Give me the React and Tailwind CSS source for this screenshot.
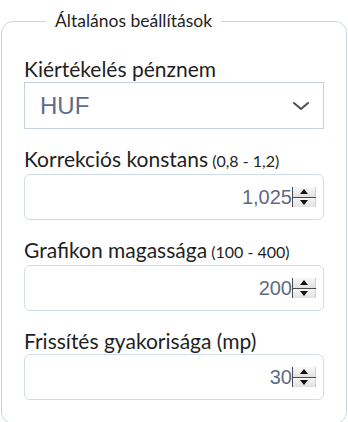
import { useState } from 'react';

function Spinner() {
  return (
    <div className="flex flex-col w-[24px] h-[20px] border-l border-[#4a4a4a] shrink-0">
      <button type="button" className="flex-1 flex items-center justify-center bg-gradient-to-b from-[#f7f7f7] to-[#e1e1e1] border-r border-[#d0d0d0]">
        <svg width="8" height="5" viewBox="0 0 8 5"><path d="M0 5L4 0L8 5Z" fill="#111" /></svg>
      </button>
      <div className="h-px bg-[#4a4a4a]" />
      <button type="button" className="flex-1 flex items-center justify-center bg-gradient-to-b from-[#f7f7f7] to-[#e1e1e1] border-r border-[#d0d0d0]">
        <svg width="8" height="5" viewBox="0 0 8 5"><path d="M0 0L8 0L4 5Z" fill="#111" /></svg>
      </button>
    </div>
  );
}

function NumberField({ label, hint, value }) {
  const [v, setV] = useState(value);
  return (
    <div className="mb-[17px]">
      <label className="block text-[21px] leading-[26px] text-[#1f1f1f]">
        {label}
        {hint && <span className="text-[16px]"> {hint}</span>}
      </label>
      <div className="flex items-center w-full h-[46px] border border-[#cfdcea] rounded-md pl-2 pr-[7px]">
        <input
          type="text"
          inputMode="decimal"
          size={1}
          value={v}
          onChange={(e) => setV(e.target.value)}
          className="flex-1 w-0 min-w-0 text-right text-[20px] text-[#5f6b85] outline-none bg-transparent"
          style={{ fontFamily: '"Liberation Sans", sans-serif' }}
        />
        <Spinner />
      </div>
    </div>
  );
}

export default function App() {
  return (
    <div className="w-[348px] h-[422px] bg-white pt-[10px] px-[1px]" style={{ fontFamily: 'Lato, sans-serif' }}>
      <fieldset className="w-[346px] min-w-0 border border-[#c8d6e6] rounded-xl px-[22px] pt-[24px] pb-[6px]">
        <legend className="ml-[22px] px-[9px] text-[17.5px] leading-[22px] text-[#1f1f1f]">Általános beállítások</legend>

        <div className="mb-[17px]">
          <label className="block text-[21px] leading-[26px] text-[#1f1f1f]">Kiértékelés pénznem</label>
          <div className="relative">
            <select
              className="block w-full h-[47px] appearance-none border border-[#c3d1e2] bg-white pl-[15px] text-[24px] text-[#5f6b85] outline-none"
              style={{ fontFamily: '"Liberation Sans Narrow", "Liberation Sans", sans-serif' }}
              defaultValue="HUF"
            >
              <option>HUF</option>
              <option>EUR</option>
              <option>USD</option>
            </select>
            <svg className="absolute right-[14px] top-1/2 -translate-y-1/2 pointer-events-none" width="18" height="10" viewBox="0 0 18 10" fill="none">
              <path d="M2 2l7 6 7-6" stroke="#4b4f58" strokeWidth="2" strokeLinecap="round" strokeLinejoin="round" />
            </svg>
          </div>
        </div>

        <NumberField label="Korrekciós konstans" hint="(0,8 - 1,2)" value="1,025" />
        <NumberField label="Grafikon magassága" hint="(100 - 400)" value="200" />
        <NumberField label="Frissítés gyakorisága (mp)" value="30" />
      </fieldset>
    </div>
  );
}
